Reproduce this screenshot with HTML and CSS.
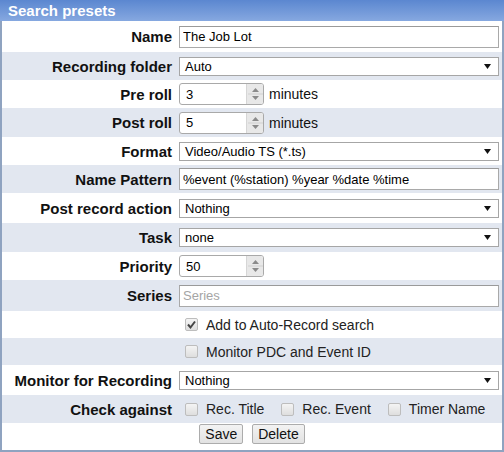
FILE: index.html
```html
<!DOCTYPE html>
<html>
<head>
<meta charset="utf-8">
<link rel="stylesheet" href="styles.css">
</head>
<body>
<div class="panel">
  <div class="head">Search presets</div>
  <div class="body">
    <div class="row h31">
      <div class="label">Name</div>
      <div class="value"><input class="text" type="text" value="The Job Lot"></div>
    </div>
    <div class="row alt">
      <div class="label">Recording folder</div>
      <div class="value"><div class="select"><span>Auto</span><svg class="arrow" width="7" height="5" viewBox="0 0 7 5"><path d="M0 0H7L3.5 5Z" fill="#111"/></svg></div></div>
    </div>
    <div class="row">
      <div class="label">Pre roll</div>
      <div class="value">
        <div class="spin"><span class="num">3</span><span class="btns"><svg width="15" height="20" viewBox="0 0 15 20"><path d="M4 8L7.5 4L11 8Z" fill="#8a8a8a"/><path d="M4 12L7.5 16L11 12Z" fill="#8a8a8a"/><path d="M0 10H15" stroke="#d0d0d0" stroke-width="1"/></svg></span></div>
        <span class="unit">minutes</span>
      </div>
    </div>
    <div class="row alt h29">
      <div class="label">Post roll</div>
      <div class="value">
        <div class="spin"><span class="num">5</span><span class="btns"><svg width="15" height="20" viewBox="0 0 15 20"><path d="M4 8L7.5 4L11 8Z" fill="#8a8a8a"/><path d="M4 12L7.5 16L11 12Z" fill="#8a8a8a"/><path d="M0 10H15" stroke="#d0d0d0" stroke-width="1"/></svg></span></div>
        <span class="unit">minutes</span>
      </div>
    </div>
    <div class="row">
      <div class="label">Format</div>
      <div class="value"><div class="select"><span>Video/Audio TS (*.ts)</span><svg class="arrow" width="7" height="5" viewBox="0 0 7 5"><path d="M0 0H7L3.5 5Z" fill="#111"/></svg></div></div>
    </div>
    <div class="row alt">
      <div class="label">Name Pattern</div>
      <div class="value"><input class="text" type="text" value="%event (%station) %year %date %time"></div>
    </div>
    <div class="row h30">
      <div class="label">Post record action</div>
      <div class="value"><div class="select"><span>Nothing</span><svg class="arrow" width="7" height="5" viewBox="0 0 7 5"><path d="M0 0H7L3.5 5Z" fill="#111"/></svg></div></div>
    </div>
    <div class="row alt h29">
      <div class="label">Task</div>
      <div class="value"><div class="select"><span>none</span><svg class="arrow" width="7" height="5" viewBox="0 0 7 5"><path d="M0 0H7L3.5 5Z" fill="#111"/></svg></div></div>
    </div>
    <div class="row">
      <div class="label">Priority</div>
      <div class="value">
        <div class="spin"><span class="num">50</span><span class="btns"><svg width="15" height="20" viewBox="0 0 15 20"><path d="M4 8L7.5 4L11 8Z" fill="#8a8a8a"/><path d="M4 12L7.5 16L11 12Z" fill="#8a8a8a"/><path d="M0 10H15" stroke="#d0d0d0" stroke-width="1"/></svg></span></div>
      </div>
    </div>
    <div class="row alt h31">
      <div class="label">Series</div>
      <div class="value"><input class="text" type="text" placeholder="Series"></div>
    </div>
    <div class="row h27">
      <div class="label"></div>
      <div class="value checks">
        <span class="check"><span class="box"><svg width="11" height="11" viewBox="0 0 11 11"><path d="M2 5.5L4.5 8.5L9 2.5" fill="none" stroke="#444" stroke-width="2"/></svg></span><span>Add to Auto-Record search</span></span>
      </div>
    </div>
    <div class="row alt h27">
      <div class="label"></div>
      <div class="value checks">
        <span class="check"><span class="box"></span><span>Monitor PDC and Event ID</span></span>
      </div>
    </div>
    <div class="row h30">
      <div class="label">Monitor for Recording</div>
      <div class="value"><div class="select"><span>Nothing</span><svg class="arrow" width="7" height="5" viewBox="0 0 7 5"><path d="M0 0H7L3.5 5Z" fill="#111"/></svg></div></div>
    </div>
    <div class="row alt">
      <div class="label">Check against</div>
      <div class="value checks">
        <span class="check"><span class="box"></span><span>Rec. Title</span></span>
        <span class="check"><span class="box"></span><span>Rec. Event</span></span>
        <span class="check"><span class="box"></span><span>Timer Name</span></span>
      </div>
    </div>
    <div class="buttons">
      <button class="btn" type="button">Save</button>
      <button class="btn" type="button">Delete</button>
    </div>
  </div>
</div>
</body>
</html>
```
FILE: styles.css
```css
html, body {
  margin: 0;
  padding: 0;
  background: #ffffff;
}
body {
  font-family: "Liberation Sans", Arial, sans-serif;
  color: #000;
}
.panel {
  width: 504px;
  height: 452px;
  display: flex;
  flex-direction: column;
}
.head {
  height: 21px;
  line-height: 21px;
  padding-left: 8px;
  background: linear-gradient(#5b87d0, #86a8e0);
  color: #ffffff;
  font-weight: bold;
  font-size: 15px;
}
.body {
  flex: 1;
  border: 2px solid #8fa3c0;
  border-top: none;
  display: flex;
  flex-direction: column;
}
.row {
  display: grid;
  grid-template-columns: 170px 1fr;
  column-gap: 7px;
  align-items: center;
  height: 28px;
  padding-right: 3px;
  background: #ffffff;
}
.row.alt { background: #e2e7f0; }
.row.h27 { height: 27px; }
.row.h29 { height: 29px; }
.row.h30 { height: 30px; }
.row.h31 { height: 31px; }
.label {
  text-align: right;
  font-weight: bold;
  font-size: 15px;
  color: #111;
}
.value {
  display: flex;
  align-items: center;
  min-width: 0;
}
.text {
  width: 100%;
  height: 22px;
  box-sizing: border-box;
  border: 1px solid #a9a9a9;
  border-top-color: #9a9a9a;
  padding: 0 3px;
  margin: 0;
  font-family: "Liberation Sans", Arial, sans-serif;
  font-size: 13px;
  color: #000;
  background: #fff;
  outline: none;
}
.text::placeholder { color: #a5a5a5; }
.select {
  flex: 1;
  height: 19px;
  box-sizing: border-box;
  border: 1px solid #a6a6a6;
  background: #ffffff;
  display: flex;
  align-items: center;
  justify-content: space-between;
  padding: 0 7px 0 5px;
  font-size: 13px;
  color: #000;
}
.arrow { display: block; }
.spin {
  width: 85px;
  height: 22px;
  box-sizing: border-box;
  border: 1px solid #a9a9a9;
  border-radius: 3px;
  background: #ffffff;
  display: flex;
  align-items: stretch;
  overflow: hidden;
  font-size: 13px;
}
.num {
  flex: 1;
  display: flex;
  align-items: center;
  padding-left: 6px;
}
.btns {
  width: 16px;
  background: #e8e8e8;
  border-left: 1px solid #d6d6d6;
  display: flex;
  align-items: center;
  justify-content: center;
}
.btns svg { display: block; }
.unit {
  margin-left: 5px;
  font-size: 14px;
  color: #111;
}
.checks {
  padding-left: 6px;
  gap: 17px;
}
.check {
  display: flex;
  align-items: center;
  gap: 8px;
  font-size: 14px;
  color: #222;
}
.box {
  width: 13px;
  height: 13px;
  box-sizing: border-box;
  border: 1px solid #bdbdbd;
  border-radius: 2px;
  background: linear-gradient(#f4f4f4, #dedede);
  display: flex;
  align-items: center;
  justify-content: center;
}
.box svg { display: block; }
.buttons {
  flex: 1;
  display: flex;
  justify-content: center;
  align-items: flex-start;
  gap: 9px;
  padding-top: 1px;
}
.btn {
  height: 20px;
  margin: 0;
  padding: 0 5px;
  border: 1px solid #acacac;
  border-radius: 2px;
  background: linear-gradient(#f3f3f3, #e2e2e2);
  font-family: "Liberation Sans", Arial, sans-serif;
  font-size: 14px;
  color: #111;
  line-height: 18px;
}
```
